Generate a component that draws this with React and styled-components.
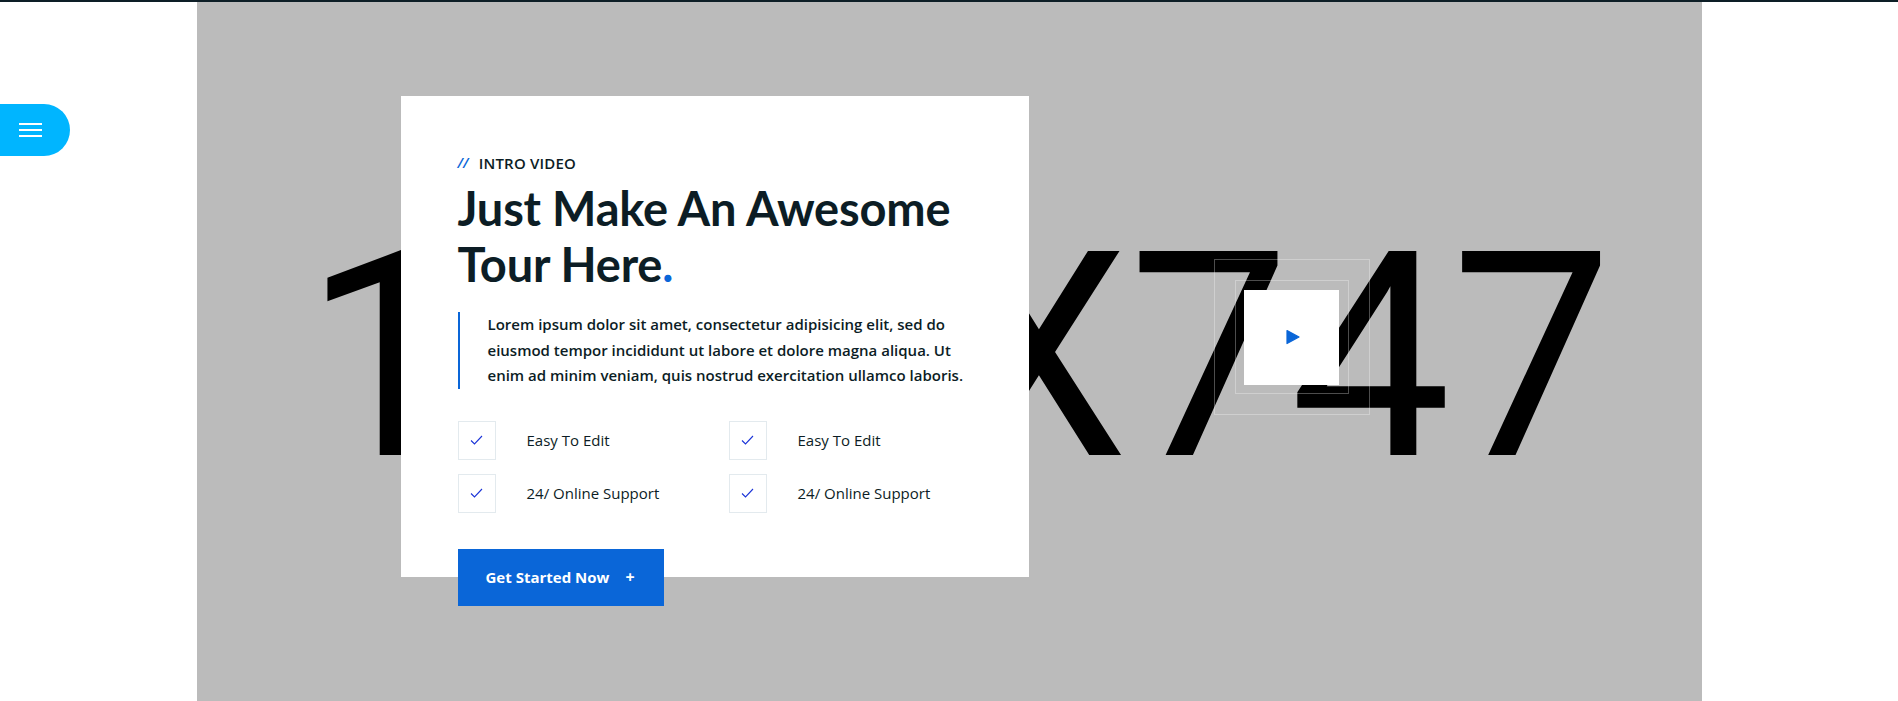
import React from 'react'
import styled, { createGlobalStyle } from 'styled-components'

const GlobalStyle = createGlobalStyle`
  html, body {
    margin: 0;
    padding: 0;
    background: #ffffff;
    overflow: hidden;
  }
  body {
    font-family: Lato, "Open Sans", sans-serif;
    color: #0c1d25;
  }
  * { box-sizing: border-box; }
`

const features = ['Easy To Edit', 'Easy To Edit', '24/ Online Support', '24/ Online Support']

const App = () => {
  return (
    <Page>
      <GlobalStyle />
      <TopLine />
      <MenuButton aria-label="menu">
        <span /><span /><span />
      </MenuButton>
      <Section>
        <Panel>
          <Placeholder>1505X747</Placeholder>
          <Overlay>
            <Card>
              <Tagline><Slashes>//</Slashes>INTRO VIDEO</Tagline>
              <Title>Just Make An Awesome Tour Here<Dot>.</Dot></Title>
              <Lead>
                Lorem ipsum dolor sit amet, consectetur adipisicing elit, sed do eiusmod tempor incididunt ut
                labore et dolore magna aliqua. Ut enim ad minim veniam, quis nostrud exercitation ullamco laboris.
              </Lead>
              <Features>
                {features.map((f, i) => (
                  <Feature key={i}>
                    <CheckBox>
                      <svg width="13" height="10" viewBox="0 0 13 10">
                        <polyline points="1,5.5 4.5,9 12,1" fill="none" stroke="#1b34d8" strokeWidth="1.1" />
                      </svg>
                    </CheckBox>
                    <span>{f}</span>
                  </Feature>
                ))}
              </Features>
              <StartButton>Get Started Now <Plus>+</Plus></StartButton>
            </Card>
            <PlayWrap>
              <Ring $size={156} />
              <Ring $size={114} />
              <PlayBox>
                <svg width="14" height="16" viewBox="0 0 14 16">
                  <path d="M1 1.5 L13 8 L1 14.5 Z" fill="#0a66d8" stroke="#0a66d8" strokeLinejoin="round" strokeWidth="1.2" />
                </svg>
              </PlayBox>
            </PlayWrap>
          </Overlay>
        </Panel>
      </Section>
    </Page>
  )
}

export default App

const Page = styled.div`
  width: 100%;
  height: 701px;
  overflow: hidden;
`

const TopLine = styled.div`
  height: 2px;
  background: #0d1e26;
`

const MenuButton = styled.button`
  position: fixed;
  top: 104px;
  left: 0;
  width: 70px;
  height: 52px;
  border: none;
  border-radius: 0 26px 26px 0;
  background: #00b5ff;
  display: flex;
  flex-direction: column;
  justify-content: center;
  gap: 4px;
  padding: 0 0 0 19px;
  z-index: 5;
  span {
    display: block;
    width: 23px;
    height: 2px;
    background: #ffffff;
  }
`

const Section = styled.section`
  display: flex;
  justify-content: center;
`

const Panel = styled.div`
  width: 1505px;
  height: 747px;
  background: #bbbbbb;
  display: grid;
  & > * {
    grid-area: 1 / 1;
  }
`

const Placeholder = styled.div`
  font-family: Roboto, sans-serif;
  font-size: 287px;
  line-height: 1;
  color: #000000;
  text-align: center;
  padding: 212px 0 0 18px;
  white-space: nowrap;
`

const Overlay = styled.div`
  display: flex;
  align-items: flex-start;
  padding: 94px 0 0 204px;
`

const Card = styled.div`
  width: 628px;
  height: 481px;
  background: #ffffff;
  padding: 57px 57px 0 57px;
`

const Tagline = styled.div`
  font-family: "Open Sans", sans-serif;
  font-size: 15px;
  line-height: 20px;
  font-weight: 600;
  letter-spacing: 0.2px;
  color: #0c1d25;
  display: flex;
  align-items: center;
`

const Slashes = styled.span`
  color: #0a66d8;
  font-style: italic;
  font-weight: 600;
  margin-right: 10px;
  font-size: 14px;
`

const Title = styled.h2`
  margin: 7px 0 0;
  font-size: 47px;
  line-height: 56px;
  font-weight: 700;
  letter-spacing: -0.2px;
  color: #0c1d25;
  max-width: 510px;
`

const Dot = styled.span`
  color: #0a66d8;
`

const Lead = styled.p`
  margin: 20px 0 0;
  border-left: 2px solid #0a66d8;
  padding-left: 28px;
  font-family: "Open Sans", sans-serif;
  font-size: 15px;
  line-height: 25.5px;
  font-weight: 600;
  color: #0c1d25;
`

const Features = styled.div`
  margin-top: 32px;
  display: grid;
  grid-template-columns: 271px 1fr;
  row-gap: 14px;
`

const Feature = styled.div`
  display: flex;
  align-items: center;
  gap: 31px;
  font-family: "Open Sans", sans-serif;
  font-size: 15px;
  font-weight: 500;
  color: #0c1d25;
`

const CheckBox = styled.div`
  width: 38px;
  height: 39px;
  border: 1px solid #e3eaee;
  display: flex;
  align-items: center;
  justify-content: center;
`

const StartButton = styled.button`
  margin-top: 36px;
  width: 206px;
  height: 57px;
  border: none;
  background: #0a66d8;
  color: #ffffff;
  font-family: "Open Sans", sans-serif;
  font-size: 15px;
  font-weight: 700;
  text-align: left;
  padding: 0 0 0 28px;
  display: flex;
  align-items: center;
`

const Plus = styled.span`
  margin-left: 16px;
  font-size: 16px;
`

const PlayWrap = styled.div`
  position: relative;
  width: 156px;
  height: 156px;
  margin: 163px 0 0 185px;
  display: flex;
  align-items: center;
  justify-content: center;
`

const Ring = styled.div`
  position: absolute;
  width: ${p => p.$size}px;
  height: ${p => p.$size}px;
  left: ${p => (156 - p.$size) / 2}px;
  top: ${p => (156 - p.$size) / 2}px;
  border: 1px solid rgba(255, 255, 255, 0.3);
`

const PlayBox = styled.div`
  position: relative;
  width: 95px;
  height: 95px;
  background: #ffffff;
  display: flex;
  align-items: center;
  justify-content: center;
  padding-left: 2px;
`
